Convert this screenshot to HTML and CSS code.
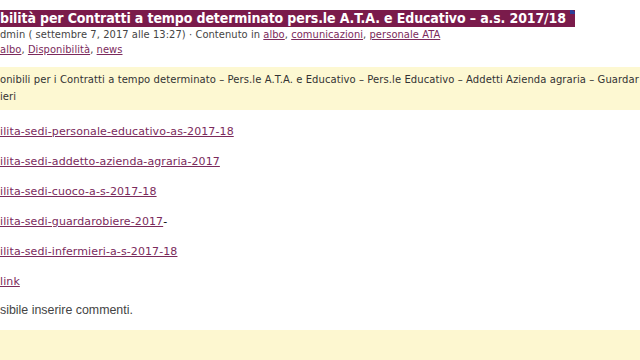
FILE: index.html
```html
<!DOCTYPE html>
<html lang="it">
<head>
    <meta charset="UTF-8">
    <meta name="viewport" content="width=device-width, initial-scale=1.0">
    <title>Disponibilità per Contratti a tempo determinato</title>
    <link rel="stylesheet" href="styles.css">
</head>
<body>

<div class="post">
    <h2 class="post-title"><span>bilità per Contratti a tempo determinato pers.le A.T.A. e Educativo – a.s. 2017/18</span></h2>
    <div class="post-meta">
        <div>dmin ( settembre 7, 2017 alle 13:27) · Contenuto in <a href="#">albo</a>, <a href="#">comunicazioni</a>, <a href="#">personale ATA</a></div>
        <div><a href="#">albo</a>, <a href="#">Disponibilità</a>, <a href="#">news</a></div>
    </div>

    <div class="post-intro">
        onibili per i Contratti a tempo determinato – Pers.le A.T.A. e Educativo – Pers.le Educativo – Addetti Azienda agraria – Guardar<br>ieri
    </div>

    <div class="post-body">
        <p><a href="#">ilita-sedi-personale-educativo-as-2017-18</a></p>
        <p><a href="#">ilita-sedi-addetto-azienda-agraria-2017</a></p>
        <p><a href="#">ilita-sedi-cuoco-a-s-2017-18</a></p>
        <p><a href="#">ilita-sedi-guardarobiere-2017</a>-</p>
        <p><a href="#">ilita-sedi-infermieri-a-s-2017-18</a></p>
        <p><a href="#">link</a></p>
    </div>

    <p class="comments-closed">sibile inserire commenti.</p>
</div>

<div class="footer"></div>

</body>
</html>
```
FILE: styles.css
```css
body {
    margin: 0;
    background-color: #fff;
    font-family: "DejaVu Sans", Verdana, sans-serif;
    overflow: hidden;
}

a {
    color: #7b2a5c;
}

.post {
    padding-top: 10px;
}

/* Titolo */
.post-title {
    margin: 0;
    font-family: "DejaVu Sans Condensed", "DejaVu Sans", sans-serif;
    font-size: 14px;
    font-weight: bold;
    line-height: 17px;
    letter-spacing: -0.12px;
}

.post-title span {
    display: inline-block;
    position: relative;
    padding-right: 9px;
    background-color: #7a1b4b;
    color: #fff;
}

.post-title span::after {
    content: "";
    position: absolute;
    top: 0;
    right: 0;
    width: 5px;
    height: 4px;
    background-color: #2b3f9a;
    border-top-right-radius: 4px;
}

.post-meta {
    font-family: "DejaVu Sans Condensed", "DejaVu Sans", sans-serif;
    font-size: 11px;
    line-height: 15px;
    letter-spacing: 0.07px;
    color: #444;
}

/* Riquadro giallo */
.post-intro {
    margin-top: 10px;
    padding: 4px 0 5px;
    background-color: #fdf8d2;
    font-size: 10px;
    line-height: 17px;
    letter-spacing: 0.08px;
    color: #333;
    white-space: nowrap;
}

.post-body {
    margin-top: 15px;
    font-size: 11px;
    line-height: 14px;
    letter-spacing: 0.1px;
}

.post-body p {
    margin: 0 0 16px;
}

.post-body p:last-child {
    margin-bottom: 14px;
}

.comments-closed {
    margin: 0;
    font-family: "Liberation Sans", Arial, sans-serif;
    font-size: 12.4px;
    color: #444;
}

.footer {
    margin-top: 13px;
    height: 40px;
    background-color: #fdf7d0;
}
```
